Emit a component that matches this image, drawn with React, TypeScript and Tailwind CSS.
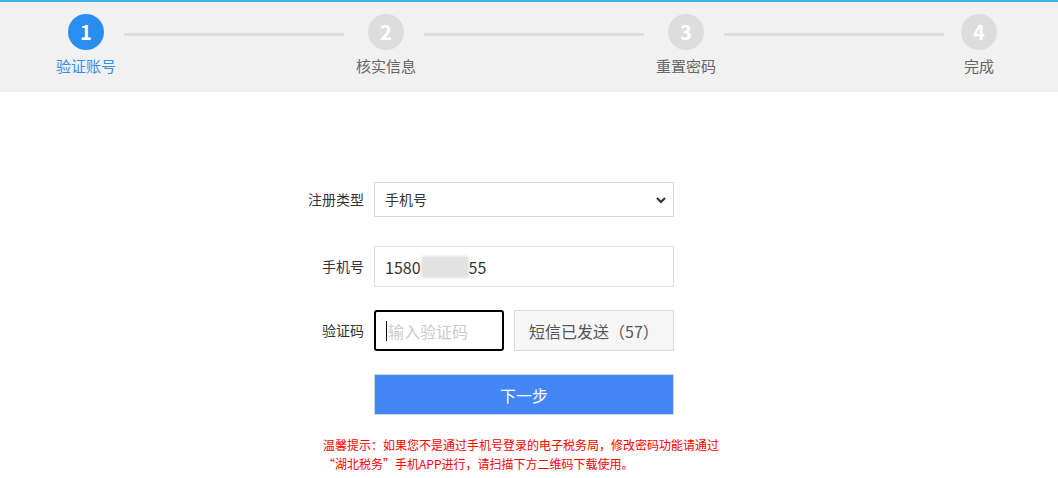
import React from 'react'

const font = { fontFamily: '"Noto Sans CJK SC", "Noto Sans", sans-serif' }

const steps = ['验证账号', '核实信息', '重置密码', '完成']

function Step({ n, label, active }: { n: number; label: string; active?: boolean }) {
  return (
    <div className="flex w-[36px] shrink-0 flex-col items-center">
      <div
        className={
          'flex h-[36px] w-[36px] items-center justify-center rounded-full text-[20px] font-bold text-white ' +
          (active ? 'bg-[#2a8ef0]' : 'bg-[#dddddd]')
        }
      >
        {n}
      </div>
      <div
        className={
          'mt-[6px] whitespace-nowrap text-[15px] leading-[20px] ' +
          (active ? 'text-[#3a8ee6]' : 'text-[#666666]')
        }
      >
        {label}
      </div>
    </div>
  )
}

function Line({ right }: { right: number }) {
  return (
    <div
      className="ml-[20px] mt-[19px] h-[3px] w-[220px] shrink-0 bg-[#dddddd]"
      style={{ marginRight: right }}
    />
  )
}

export default function App() {
  return (
    <div className="min-h-[478px] w-full bg-white text-[#333]" style={font}>
      {/* ─── STEPS ─── */}
      <div className="h-[2px] bg-[#3fb0ee]" />
      <div className="flex h-[90px] items-start bg-[#f1f1f1] pl-[68px] pt-[12px]">
        <Step n={1} label={steps[0]} active />
        <Line right={24} />
        <Step n={2} label={steps[1]} />
        <Line right={24} />
        <Step n={3} label={steps[2]} />
        <Line right={17} />
        <Step n={4} label={steps[3]} />
      </div>

      {/* ─── FORM ─── */}
      <div className="ml-[300px] mt-[90px] w-[374px]">
        <div className="flex h-[35px] items-center">
          <label className="w-[64px] text-right text-[14px]">注册类型</label>
          <div className="ml-[10px] flex h-[35px] flex-1 items-center justify-between border border-[#d9d9d9] bg-white pl-[10px] pr-[6px] text-[14px]">
            <span>手机号</span>
            <svg width="12" height="12" viewBox="0 0 12 12">
              <path d="M2 4 L6 8 L10 4" fill="none" stroke="#333" strokeWidth="2.2" />
            </svg>
          </div>
        </div>

        <div className="mt-[29px] flex h-[41px] items-center">
          <label className="w-[64px] text-right text-[14px]">手机号</label>
          <div className="ml-[10px] flex h-[41px] flex-1 items-center border border-[#dddddd] bg-white pl-[10px] text-[16px]">
            <span>1580</span>
            <span className="inline-block h-[22px] w-[48px] rounded-[3px] bg-[#e2e2e2] blur-[1px]" />
            <span>55</span>
          </div>
        </div>

        <div className="mt-[23px] flex h-[41px] items-center">
          <label className="w-[64px] text-right text-[14px]">验证码</label>
          <div className="ml-[10px] flex h-[41px] w-[130px] items-center rounded-[3px] border-2 border-black bg-white pl-[10px] text-[16px] text-[#cccccc]">
            <span className="mr-[1px] h-[20px] w-[1px] bg-black" />
            <span>输入验证码</span>
          </div>
          <div className="ml-[10px] flex h-[41px] flex-1 items-center justify-center border border-[#d9d9d9] bg-[#f6f6f6] text-[16px] text-[#555]">
            短信已发送（57）
          </div>
        </div>

        <div className="mt-[23px] flex">
          <div className="ml-[74px] flex h-[41px] flex-1 items-center justify-center border border-[#cfd8e6] bg-[#4287f5] text-[16px] text-white">
            下一步
          </div>
        </div>
      </div>

      <div className="ml-[323px] mt-[20px] text-[12px] leading-[19px] text-[#ff0000]">
        温馨提示：如果您不是通过手机号登录的电子税务局，修改密码功能请通过
        <br />
        “湖北税务”手机APP进行，请扫描下方二维码下载使用。
      </div>
    </div>
  )
}
